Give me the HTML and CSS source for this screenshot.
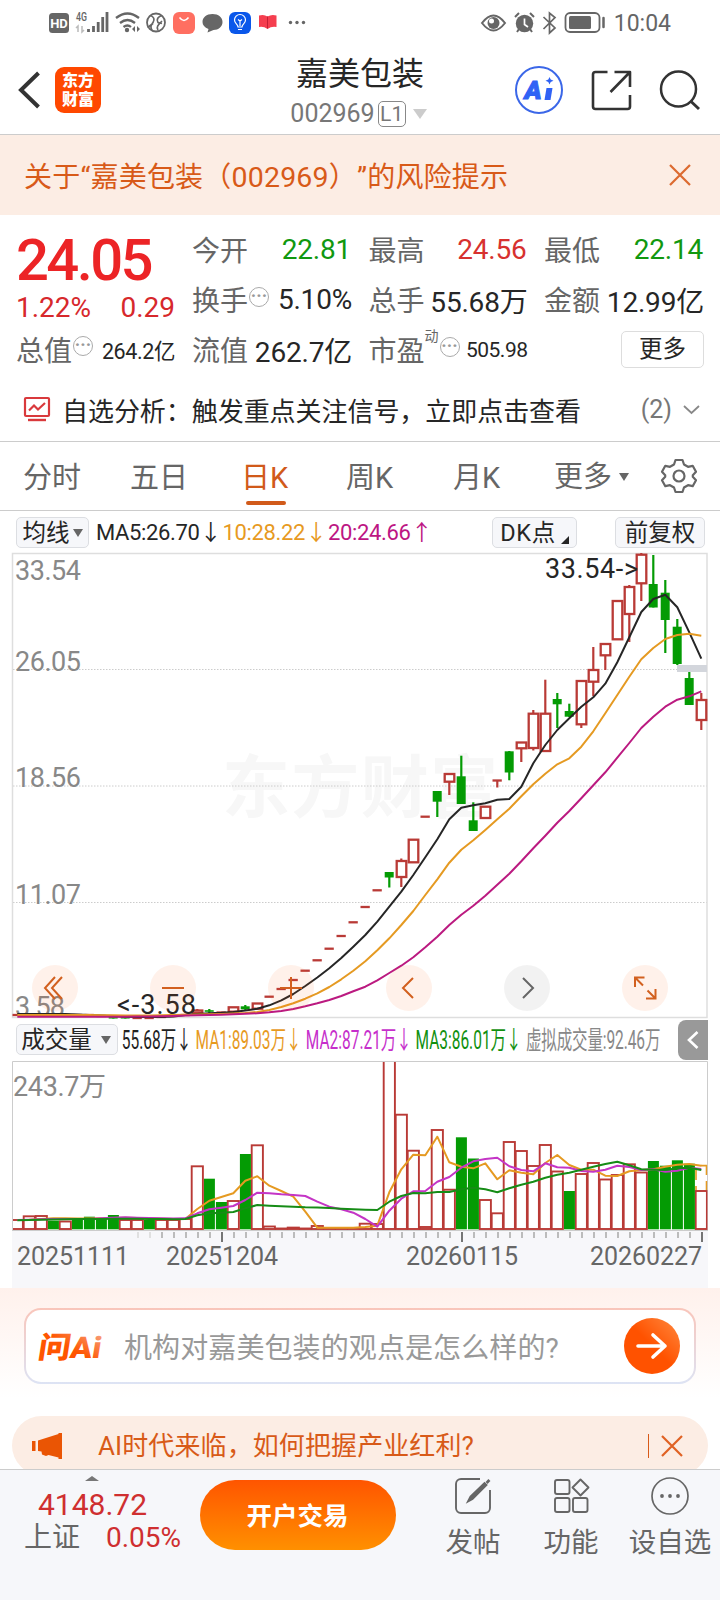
FILE: index.html
```html
<!DOCTYPE html>
<html lang="zh-CN">
<head>
  <meta charset="UTF-8" />
  <meta name="viewport" content="width=device-width, initial-scale=1.0" />
  <title>嘉美包装 002969</title>
  <link rel="stylesheet" href="styles.css">
</head>
<body>
  <div class="status-bar">
    <svg class="status-icons" width="310" height="44" viewBox="0 0 310 44">
      <rect x="49" y="13" width="20" height="20" rx="3.5" fill="#666" />
      <text class="hd" x="59" y="28" text-anchor="middle">HD</text>
      <text class="net" x="76" y="21" textLength="11" lengthAdjust="spacingAndGlyphs">4G</text>
      <path d="M78 32v-6l-2 2M82 26v6l2-2" stroke="#bbb" stroke-width="1.5" fill="none" />
      <path d="M88.5 32v-3M93.5 32v-6M98.200 32v-10M102.700 32v-15M107 32v-20" stroke="#666" stroke-width="2.800" />
      <path d="M116 18q11.500-9 23 0M120 23q7.500-6 15 0M123.500 27q4-3 7.500 0" stroke="#666" stroke-width="2.300" fill="none" />
      <circle cx="127" cy="30" r="2.200" fill="#666" />
      <path d="M135 26v6l-3-3zM137 26v6l3-3z" fill="#666" />
      <circle cx="156" cy="22.500" r="9" stroke="#666" stroke-width="1.800" fill="none" />
      <path d="M150 15.500c4 1 5 4 3 7s-3 4-1 8M162 15.500c-4 1-6 4-4 7l4 1M147.500 27.500l5.500-4M158 30c-2-3 0-5 4-9" stroke="#666" stroke-width="1.700" fill="none" />
      <rect x="173" y="12" width="22" height="22" rx="6" fill="#ff6f61" />
      <path d="M179.500 17.500q4.500 6 9 0" stroke="#fff" stroke-width="1.500" fill="none" />
      <path d="M212.500 14c6 0 10 3.500 10 8s-4 8-9 8l-6 2.500 1-3.500c-4-1.500-6-4-6-7 0-4.500 4-8 10-8z" fill="#666" />
      <rect x="229" y="12" width="22" height="22" rx="6" fill="#0a57ea" />
      <path d="M238 27c0-3-3.500-3.500-3.500-7a5.500 5.500 0 0 1 11 0c0 3.500-3.500 4-3.500 7zM238 29.500h4M240 26v-5l-2-1.500M240 21l2-1.500" stroke="#fff" stroke-width="1.200" fill="none" />
      <path d="M259 15.500q5-1.500 8.500 1 4-2.500 9-1v11.500q-5-1-9 2-4-3-8.500-2z" fill="#f53e4f" />
      <path d="M267.500 16.500v12" stroke="#c41f35" stroke-width="1" />
      <g fill="#666"><circle cx="290.500" cy="22.500" r="1.700" /><circle cx="297" cy="22.500" r="1.700" /><circle cx="303.500" cy="22.500" r="1.700" /></g>
    </svg>
    <div class="status-right">
      <svg width="126" height="44" viewBox="480 0 126 44">
        <path d="M482 23q11.500-15 23 0-11.500 15-23 0z" stroke="#666" stroke-width="2" fill="none" />
        <circle cx="493.500" cy="23" r="6" fill="#666" />
        <circle cx="491.500" cy="21" r="2.500" fill="#fff" />
        <circle cx="524.500" cy="23.500" r="8.700" fill="#666" />
        <path d="M515 17l4-4M534 17l-4-4M517 32l2-3M532 32l-2-3" stroke="#666" stroke-width="2" />
        <path d="M524.500 18.500v6l3.500 2.500" stroke="#fff" stroke-width="1.700" fill="none" />
        <path d="M543.500 17l11.500 11-5.500 5V13l5.500 4.500L543.500 29" stroke="#666" stroke-width="1.700" fill="none" />
        <rect x="565.500" y="13" width="34" height="19" rx="4.500" stroke="#666" stroke-width="1.800" fill="none" />
        <rect x="569" y="16" width="22" height="13" rx="1.500" fill="#666" />
        <path d="M603.500 18v9" stroke="#666" stroke-width="2.500" stroke-linecap="round" />
      </svg>
      <span class="clock">10:04</span>
    </div>
  </div>

  <header class="header">
    <div class="header-left">
      <svg width="22" height="38" viewBox="0 0 22 38"><path d="M20.500 2L3 19l17.500 17" stroke="#333" stroke-width="4" fill="none" /></svg>
      <div class="logo">东方<br>财富</div>
    </div>
    <div class="header-title">
      <div class="name">嘉美包装</div>
      <div class="code"><span>002969</span><span class="level">L1</span><i class="tri light"></i></div>
    </div>
    <div class="header-right">
      <svg class="ai-icon" width="48" height="48" viewBox="0 0 48 48">
        <circle cx="24" cy="24" r="23" fill="none" stroke="#3b67e8" stroke-width="2" />
        <text x="9.500" y="32.500">A</text>
        <path d="M31.500 22h6l-2 12h-6z" fill="#2f62f5" />
        <path d="M34.500 11l1.200 2.600 2.800 1.200-2.800 1.200-1.200 2.600-1.200-2.600-2.800-1.200 2.800-1.200z" fill="#2f62f5" />
      </svg>
      <svg width="40" height="40" viewBox="0 0 40 40" fill="none" stroke="#333" stroke-width="2.600" stroke-linejoin="round">
        <path d="M16.500 2H4.500A2.500 2.500 0 0 0 2 4.500v32A2.500 2.500 0 0 0 4.500 39h32a2.500 2.500 0 0 0 2.500-2.500V25M23.500 2H39v15M39 2L19.500 22" />
      </svg>
      <svg width="42" height="40" viewBox="0 0 42 40" fill="none" stroke="#333" stroke-width="2.500">
        <circle cx="19.500" cy="19" r="17.500" /><path d="M31.500 31L40 39" stroke-width="3" />
      </svg>
    </div>
  </header>

  <div class="risk-banner">
    <span>关于“嘉美包装（<span class="digits">002969</span>）”的风险提示</span>
    <svg width="24" height="24" viewBox="0 0 24 24"><path d="M2 2l20 20M22 2L2 22" stroke="#dc6a30" stroke-width="2.200" /></svg>
  </div>

  <section class="quote">
    <div class="quote-price">
      <div class="price">24.05</div>
      <div class="change"><span>1.22%</span><span>0.29</span></div>
      <div class="cell"><label>总值</label><i class="more-dot">···</i><b class="small">264.2亿</b></div>
    </div>
    <div class="quote-grid">
      <div class="cell"><label>今开</label><b class="green">22.81</b></div>
      <div class="cell"><label>最高</label><b class="red">24.56</b></div>
      <div class="cell"><label>最低</label><b class="green">22.14</b></div>
      <div class="cell"><label>换手</label><i class="more-dot">···</i><b>5.10%</b></div>
      <div class="cell"><label>总手</label><b>55.68万</b></div>
      <div class="cell"><label>金额</label><b>12.99亿</b></div>
      <div class="cell"><label>流值</label><b>262.7亿</b></div>
      <div class="cell"><label>市盈<sup>动</sup></label><i class="more-dot shifted">···</i><b class="small pe">505.98</b></div>
      <div class="cell"><button class="more-btn">更多</button></div>
    </div>
  </section>

  <div class="analysis">
    <svg width="26" height="25" viewBox="0 0 26 25" fill="none" stroke="#d9393c">
      <rect x="1" y="1" width="24" height="18" rx="1" stroke-width="2.200" />
      <path d="M5 13.500l5-5 4 4 7-6.500" stroke-width="2.200" /><path d="M4 23h18" stroke-width="2.400" />
    </svg>
    <span class="analysis-text">自选分析：触发重点关注信号，立即点击查看</span>
    <span class="analysis-count">(2)</span>
    <svg width="17" height="10" viewBox="0 0 17 10"><path d="M1 1l7.500 7L16 1" stroke="#888" stroke-width="1.800" fill="none" /></svg>
  </div>

  <nav class="tabs">
    <span>分时</span>
    <span>五日</span>
    <span class="active">日K</span>
    <span>周K</span>
    <span>月K</span>
    <span class="tab-more">更多<i class="tri"></i></span>
    <svg width="36" height="36" viewBox="0 0 36 36" fill="none" stroke="#666" stroke-width="2.200" stroke-linejoin="round">
      <path d="M14.500 2h7l1.500 4.500 4 2.300 4.700-1 3.300 6-3.200 3.500v1.400l3.200 3.500-3.300 6-4.700-1-4 2.300L21.500 34h-7L13 29.500l-4-2.300-4.700 1-3.300-6 3.200-3.500v-1.400L1 13.800l3.300-6 4.700 1 4-2.300z" />
      <circle cx="18" cy="18" r="5.500" />
    </svg>
  </nav>

  <div class="legend">
    <button class="chip chip-ma">均线<i class="tri"></i></button>
    <span class="ma ma5">MA5:26.70<em>↓</em></span>
    <span class="ma ma10">10:28.22<em>↓</em></span>
    <span class="ma ma20">20:24.66<em>↑</em></span>
    <button class="chip chip-dk">DK点<i class="corner"></i></button>
    <button class="chip chip-adj">前复权</button>
  </div>

  <div class="chart">
    <svg id="kline" width="720" height="466" viewBox="0 553 720 466"></svg>
    <div class="chart-tools">
      <button><svg viewBox="0 0 46 46"><path d="M23 12L13 23l10 11M30 12L20 23l10 11" /></svg></button>
      <button><svg viewBox="0 0 46 46"><path d="M12 23h22" /></svg></button>
      <button><svg viewBox="0 0 46 46"><path d="M12 23h22M23 12v22" /></svg></button>
      <button><svg viewBox="0 0 46 46"><path d="M27 13L17 23l10 10" /></svg></button>
      <button class="off"><svg viewBox="0 0 46 46"><path d="M19 13l10 10-10 10" /></svg></button>
      <button><svg viewBox="0 0 46 46"><path d="M13 22v-9.500h9.500M13 12.500l8 8M33.500 24v9.500H24M33.500 33.500l-8-8" /></svg></button>
    </div>
  </div>

  <div class="vol-head">
    <button class="chip chip-vol">成交量<i class="tri"></i></button>
    <!-- squeezed horizontally so that all values fit on one line -->
    <svg width="548" height="42" viewBox="0 0 884 42" preserveAspectRatio="none">
      <text x="6" y="30" textLength="113" fill="#222">55.68万↓</text>
      <text x="125" y="30" textLength="171" fill="#e79a1f">MA1:89.03万↓</text>
      <text x="303" y="30" textLength="171" fill="#c62fcb">MA2:87.21万↓</text>
      <text x="480" y="30" textLength="171" fill="#11900f">MA3:86.01万↓</text>
      <text x="658" y="30" textLength="217" fill="#888">虚拟成交量:92.46万</text>
    </svg>
    <button class="collapse"><svg width="12" height="20" viewBox="0 0 12 20"><path d="M10.500 2L2 10l8.500 8" stroke="#fff" stroke-width="2.600" fill="none" /></svg></button>
  </div>

  <svg id="volume" width="720" height="227" viewBox="0 1061 720 227"></svg>

  <div class="bottom-feed">
    <div class="ask">
      <svg class="ask-logo" width="68" height="40" viewBox="0 0 68 40">
        <defs>
          <linearGradient id="askGrad" x1="0" x2="1" y1="1" y2="0"><stop offset="0.500" stop-color="#ff5500" /><stop offset="1" stop-color="#f7ad93" /></linearGradient>
        </defs>
        <g transform="skewX(-9)">
          <text x="4" y="32" textLength="63" lengthAdjust="spacingAndGlyphs" fill="url(#askGrad)">问Ai</text>
        </g>
      </svg>
      <span class="ask-text">机构对嘉美包装的观点是怎么样的?</span>
      <span class="ask-go"><svg width="32" height="28" viewBox="0 0 32 28"><path d="M2 14h27M17 3l12 11-12 11" stroke="#fff" stroke-width="3.600" fill="none" stroke-linecap="round" stroke-linejoin="round" /></svg></span>
    </div>
    <div class="notice">
      <svg width="31" height="28" viewBox="0 0 31 28" fill="#ea5504">
        <path d="M0 9h3.500v10H0zM6 8.500L26.500 2V1H30v26h-3.500v-1.500l-10-2.500-2.500 1-4-1.500-.5-3L6 19z" />
      </svg>
      <span class="notice-text">AI时代来临，如何把握产业红利?</span>
      <i class="bar"></i>
      <svg width="22" height="22" viewBox="0 0 22 22"><path d="M1 1l20 20M21 1L1 21" stroke="#e06224" stroke-width="2.200" /></svg>
    </div>
  </div>

  <footer class="footer">
    <div class="index">
      <i class="caret"></i>
      <div class="index-value">4148.72</div>
      <div class="index-row"><span>上证</span><b>0.05%</b></div>
    </div>
    <button class="trade">开户交易</button>
    <div class="actions">
      <div class="action action-post">
        <svg width="38" height="38" viewBox="0 0 38 38" fill="none" stroke="#666" stroke-width="1.900">
          <path d="M26 2H7a5 5 0 0 0-5 5v24a5 5 0 0 0 5 5h24a5 5 0 0 0 5-5V13" />
          <path d="M14 24.500l2.500-5L30.500 6l2 2-14 14z" fill="#666" /><path d="M33 3.500l2 2" stroke-width="4" />
        </svg>
        <span>发帖</span>
      </div>
      <div class="action action-func">
        <svg width="38" height="38" viewBox="0 0 38 38" fill="none" stroke="#666" stroke-width="1.900" stroke-linejoin="round">
          <rect x="3" y="3" width="14.500" height="14" rx="2" /><rect x="3" y="21" width="14.500" height="14" rx="2" /><rect x="21" y="21" width="14.500" height="14" rx="2" />
          <path d="M28.500 2.500l8 8-8 8-8-8z" />
        </svg>
        <span>功能</span>
      </div>
      <div class="action action-fav">
        <svg width="38" height="38" viewBox="0 0 38 38">
          <circle cx="19" cy="19" r="18" fill="none" stroke="#666" stroke-width="1.700" />
          <g fill="#666"><circle cx="11" cy="19" r="1.900" /><circle cx="19" cy="19" r="1.900" /><circle cx="27" cy="19" r="1.900" /></g>
        </svg>
        <span>设自选</span>
      </div>
    </div>
  </footer>

  <script>
    const RED = '#b93a36';
    const GREEN = '#049b04';
    const STEP = 12;
    const LAST_X = 701.3;
    const xAt = i => LAST_X - i * STEP;

    // newest first: [colour, body top, body bottom, high, low]
    const candles = [
      ['r', 700, 720, 693, 730], ['g', 678, 705, 672, 705], ['g', 626.7, 664, 619, 665],
      ['g', 592.7, 620, 580, 653], ['g', 584, 607.5, 555, 607.5], ['r', 554.7, 583.3, 553, 601],
      ['r', 587, 614, 585, 642], ['r', 601, 639.3, 601, 639.3], ['r', 644, 655.3, 644, 670],
      ['r', 670, 681.7, 647, 696], ['r', 681, 724.3, 681, 728], ['g', 711, 716.7, 703.7, 717],
      ['g', 699, 704.3, 693, 728], ['r', 713.7, 751, 679.7, 751], ['r', 713.7, 748, 710, 750.5],
      ['r', 742.5, 748.3, 742, 762], ['g', 751.3, 772.5, 751, 780.3], ['r', 780.5, 780.5, 780, 787.5],
      ['r', 806.7, 818, 807, 818], ['g', 820.3, 831, 802.3, 831], ['g', 776.3, 804, 755.7, 804],
      ['r', 774, 781.7, 774, 795], ['g', 791, 801.7, 791, 817], ['r', 816.7, 816.7], ['r', 839.7, 862.3, 840, 862],
      ['r', 861, 877, 858.5, 887], ['g', 872, 877.5, 872, 887.5], ['r', 890.3, 890.3], ['r', 907, 907],
      ['r', 922.3, 922.3], ['r', 936, 936], ['r', 948.7, 948.7], ['r', 960.3, 960.3], ['r', 970.7, 970.7],
      ['r', 980, 980], ['r', 989, 989], ['r', 996.7, 996.7], ['r', 1003.5, 1008.7], ['g', 1006.3, 1009.3, 1005, 1010.5],
      ['r', 1007.3, 1011.7], ['r', 1012.5, 1012.5], ['g', 1010.2, 1011.8, 1009, 1013], ['r', 1010.5, 1013, 1009, 1013],
      ['r', 1015, 1015], ['r', 1016, 1016], ['r', 1017, 1017], ['r', 1018, 1018], ['r', 1018, 1018], ['g', 1017, 1018.5],
      ['g', 1017, 1018.5], ['r', 1016, 1016], ['r', 1015, 1015], ['r', 1015, 1015], ['r', 1015, 1015], ['r', 1015, 1015],
      ['r', 1015, 1015], ['r', 1015, 1015], ['r', 1015, 1015]
    ];

    const ma5 = [658.7, 632.3, 607.3, 594.7, 599, 612, 637.3, 662.3, 683.7, 697.3, 706.7, 718.3, 730, 745, 763.3, 786.7, 799, 799.7, 803.3, 805.3, 807.7, 819.3, 839.3, 857.3, 875, 891.7, 906.7, 921.7, 935, 946.7, 958, 968.3, 977.5, 986, 994, 1000.3, 1005.3, 1008.7, 1010.5, 1012, 1012.8, 1013.3, 1014, 1015, 1016.5, 1017, 1017, 1017, 1016.7, 1016, 1015.5, 1015, 1014.5, 1014, 1014, 1014, 1014, 1014];
    const ma10 = [635.7, 633.7, 635, 639, 648, 659.3, 676.7, 695, 713.3, 731.3, 746.7, 758.3, 764.3, 773.7, 784.3, 796.3, 808.7, 819.3, 830, 840.3, 849.7, 862.7, 879.3, 895, 911, 925, 938.3, 950.3, 961.3, 970.7, 979.3, 987, 993.3, 998.7, 1003.3, 1007, 1010, 1012, 1013, 1013.5, 1014, 1014.3, 1014.6, 1014.8, 1015, 1015.3, 1015.5, 1015.5, 1015.5, 1015.3, 1015.3, 1015, 1015, 1015, 1015, 1015, 1015, 1015];
    const ma20 = [691.3, 696.3, 699.7, 706.7, 716.7, 728, 743, 757.7, 772.3, 785.3, 798.3, 811, 822.7, 835.7, 848.3, 861.3, 873.7, 884.7, 895.7, 905.7, 914.7, 925, 936.7, 947.3, 957.3, 965.7, 973, 980.3, 986.7, 991.3, 996, 1000, 1003.3, 1006.3, 1009, 1011, 1012.3, 1013.3, 1013.8, 1014.3, 1014.7, 1015, 1015.3, 1015.6, 1016, 1016.3, 1016.5, 1016.5, 1016.7, 1016.7, 1016.7, 1016.7, 1016.7, 1016.7, 1016.7, 1016.7, 1016.7, 1016.7];

    // newest first: [colour, bar top]
    const volumes = [
      ['r', 1191], ['g', 1163.7], ['g', 1160.3], ['g', 1165.7], ['g', 1161], ['r', 1172.5], ['r', 1164.3], ['r', 1175],
      ['r', 1179.5], ['r', 1163], ['r', 1174], ['g', 1191], ['r', 1171.5], ['r', 1145], ['r', 1166], ['r', 1151],
      ['r', 1142], ['r', 1213.3], ['r', 1200], ['g', 1158.5], ['g', 1137.3], ['r', 1189.7], ['r', 1130], ['r', 1227],
      ['r', 1150.7], ['r', 1114.7], ['r', 1050], ['r', 1224], ['r', 1223.7], ['r', 1228.5], ['r', 1228.5], ['r', 1228.5],
      ['r', 1226], ['r', 1228.5], ['r', 1227.6], ['r', 1228.5], ['r', 1226.5], ['r', 1145.3], ['g', 1154], ['r', 1201],
      ['g', 1202], ['g', 1178.7], ['r', 1166.3], ['r', 1219], ['r', 1220], ['r', 1220], ['g', 1220], ['r', 1220],
      ['r', 1220], ['g', 1215], ['g', 1218.7], ['g', 1216.7], ['g', 1220], ['r', 1221.5], ['g', 1220.7], ['r', 1216],
      ['r', 1216.3], ['r', 1220]
    ];
    const vma1 = [1165.7, 1164, 1164.7, 1166.7, 1169.3, 1170, 1171.3, 1176, 1175.7, 1169.7, 1169.7, 1165, 1155, 1163, 1174.3, 1172.7, 1170.3, 1179.3, 1163.3, 1168.3, 1166.7, 1162.3, 1136.7, 1155.3, 1154.7, 1169.3, 1192.3, 1225.7, 1227, 1227.7, 1227.7, 1227.7, 1227.7, 1211.7, 1196.7, 1191, 1185.7, 1176.3, 1180.7, 1193.3, 1197, 1200.7, 1209, 1219, 1219, 1218.7, 1218.3, 1218, 1217.7, 1218, 1218.3, 1218.5, 1218.5, 1218.3, 1218.3, 1219, 1219.7, 1220];
    const vma2 = [1169, 1167.7, 1170.7, 1171.7, 1169.3, 1170, 1167, 1165.7, 1169.7, 1171.7, 1171, 1167.7, 1167.3, 1163.3, 1171.3, 1170, 1166.3, 1157.7, 1159, 1161.3, 1167.7, 1177, 1181.7, 1191, 1191.3, 1198.7, 1210.7, 1226.7, 1219, 1212.7, 1209.3, 1206.7, 1201.7, 1196, 1195, 1194.3, 1193.3, 1192.7, 1200, 1206, 1207.7, 1209.3, 1213.3, 1218.3, 1218.5, 1218.3, 1218, 1217.7, 1217.3, 1217.7, 1218.3, 1219, 1219, 1219, 1219, 1219.3, 1219.7, 1220];
    const vma3 = [1170, 1167.7, 1168.3, 1170, 1169.7, 1169.3, 1165.3, 1161.7, 1164, 1166.7, 1169.7, 1172.7, 1174.7, 1177.7, 1181.7, 1184.7, 1188.3, 1192.3, 1189.3, 1187.7, 1189.3, 1192, 1192, 1193.3, 1193, 1196, 1201.7, 1210, 1209.7, 1209.3, 1208.7, 1208, 1207.5, 1207.3, 1206.7, 1206.3, 1205.7, 1205, 1208.3, 1212, 1212.7, 1213.3, 1215.3, 1219, 1219.3, 1219, 1219, 1218.7, 1218.7, 1218.7, 1219, 1219, 1219, 1219.3, 1219.5, 1219.7, 1220, 1220.3];

    function line(values, color) {
      const pts = values.map((y, i) => `${xAt(i).toFixed(1)},${y}`).join(' ');
      return `<polyline points="${pts}" fill="none" stroke="${color}" stroke-width="2" stroke-linejoin="round" />`;
    }

    function candle([c, top, bottom, high = top, low = bottom], i) {
      const x = xAt(i);
      const color = c === 'r' ? RED : GREEN;
      if (c === 'g') {
        return `<path d="M${x - 4.6} ${top}h9v${bottom - top}h-9z" fill="${color}" /><path d="M${x} ${high}V${low}" stroke="${color}" stroke-width="2.2" />`;
      }
      let out = '';
      if (high < top) out += `<path d="M${x} ${high}V${top}" stroke="${color}" stroke-width="2.2" />`;
      if (low > bottom) out += `<path d="M${x} ${bottom}V${low}" stroke="${color}" stroke-width="2.2" />`;
      if (bottom - top < 1) {
        return out + `<path d="M${x - 4.8} ${top}h9.300" stroke="${color}" stroke-width="2.3" />`;
      }
      return out + `<rect x="${x - 4.6}" y="${top}" width="9.600" height="${bottom - top}" fill="#fff" stroke="${color}" stroke-width="2.3" />`;
    }

    function drawKline() {
      let s = '<text class="watermark" x="222" y="812" textLength="276">东方财富</text>';
      [669.5, 786, 902.5].forEach(y => {
        s += `<path d="M13 ${y}H707" stroke="#ccc" stroke-width="1" stroke-dasharray="1.5 1.5" />`;
      });
      s += '<rect x="12.500" y="553.500" width="694.500" height="464" fill="none" stroke="#dedede" stroke-width="1.500" />';
      [['33.54', 580], ['26.05', 671], ['18.56', 787], ['11.07', 904], ['3.58', 1015.5]].forEach(([t, y]) => {
        s += `<text class="axis" x="15" y="${y}" textLength="${t.length === 5 ? 66 : 50}">${t}</text>`;
      });
      s += candles.map(candle).join('');
      s += line(ma5, '#262626') + line(ma10, '#e59a22') + line(ma20, '#bb1a80');
      s += '<rect x="677" y="665" width="30" height="7" fill="#d3d6dc" />';
      s += '<text class="mark" x="545" y="578" textLength="93">33.54-&gt;</text>';
      s += '<text class="mark" x="117" y="1013.500" textLength="79">&lt;-3.58</text>';
      document.getElementById('kline').innerHTML = s;
    }

    function drawVolume() {
      let s = '<rect x="12" y="1231" width="696" height="57" fill="#f7f7fa" />';
      s += '<path d="M12.500 1230V1061.500H707.500V1230" fill="none" stroke="#ccc" stroke-width="1" />';
      s += '<path d="M12 1230.500H708" stroke="#ccc" stroke-width="1" />';
      s += '<text class="axis" x="13" y="1096" textLength="93">243.7万</text>';
      s += '<clipPath id="volClip"><rect x="13" y="1062" width="694.500" height="168" /></clipPath><g clip-path="url(#volClip)">';
      volumes.forEach(([c, top], i) => {
        const x = xAt(i);
        if (c === 'g') {
          s += `<rect x="${x - 5.4}" y="${top}" width="11" height="${1229.3 - top}" fill="${GREEN}" />`;
        } else {
          s += `<rect x="${x - 5.6}" y="${top}" width="11.200" height="${1229 - top}" fill="none" stroke="${RED}" stroke-width="1.9" />`;
        }
      });
      s += '<path d="M696 1170v20M706.500 1165v25" stroke="#e59a22" stroke-width="1.600" stroke-dasharray="10 6" />';
      s += line(vma1, '#e59a22') + line(vma2, '#c435c6') + line(vma3, '#168c16');
      s += '<path d="M701 1165.700h6" stroke="#e59a22" stroke-width="1.800" /></g>';
      for (let i = 47; i >= 0; i--) {
        const major = i % 20 === 0;
        s += `<path d="M${xAt(i) + 0.7} 1232v${major ? 10 : 6}" stroke="${major ? '#666' : i > 45 ? '#ddd' : '#b5b5b5'}" stroke-width="1.8" />`;
      }
      [['20251111', 17], ['20251204', 166], ['20260115', 406], ['20260227', 590]].forEach(([t, x]) => {
        s += `<text class="date" x="${x}" y="1264.500" textLength="112">${t}</text>`;
      });
      document.getElementById('volume').innerHTML = s;
    }

    drawKline();
    drawVolume();
  </script>
</body>
</html>
```
FILE: styles.css
```css
* { box-sizing: border-box; }
body {
  margin: 0;
  width: 720px;
  height: 1600px;
  overflow: hidden;
  display: flex;
  flex-direction: column;
  background: #fff;
  color: #262626;
  font-family: Roboto, "Noto Sans CJK SC", sans-serif;
}
body > * { flex-shrink: 0; }
button {
  font-family: inherit;
  padding: 0;
  border: 0;
  color: #262626;
  background: none;
}
svg { display: block; flex-shrink: 0; overflow: visible; }
i, em, b { font-style: normal; font-weight: 400; }

.tri {
  display: inline-block;
  border: 5px solid transparent;
  border-top: 8px solid #666;
  border-bottom: 0;
}
.tri.light { border-width: 10px 7px 0; border-top-color: #ccc; }

/* status bar */
.status-bar { height: 44px; display: flex; justify-content: space-between; }
.status-right { display: flex; padding-right: 49px; gap: 8px; }
.clock { line-height: 47px; font-size: 23px; color: #666; }
.hd { font-size: 13px; font-weight: 700; fill: #fff; }
.net { font-size: 13px; font-weight: 500; fill: #666; }

/* header */
.header {
  height: 91px;
  border-bottom: 1px solid #ccc;
  display: grid;
  grid-template-columns: 1fr auto 1fr;
}
.header-left { display: flex; align-items: center; padding: 2px 0 0 18px; gap: 15px; }
.logo {
  width: 46px;
  height: 46px;
  padding-top: 4px;
  border-radius: 9px;
  background: #ff4800;
  color: #fff;
  font-size: 16px;
  font-weight: 900;
  line-height: 19px;
  text-align: center;
}
.header-title { padding-top: 11px; text-align: center; }
.name { font-size: 32px; line-height: 38px; }
.code {
  display: flex;
  align-items: center;
  margin: 6px 0 0 -3px;
  line-height: 30px;
  font-size: 25px;
  color: #777;
}
.level {
  width: 28px;
  height: 26px;
  margin: 0 7px 0 3px;
  border: 1.5px solid #888;
  border-radius: 5px;
  font-size: 21px;
  line-height: 24px;
}
.header-right {
  display: flex;
  align-items: center;
  justify-content: flex-end;
  gap: 28px;
  padding: 2px 19px 0 0;
}
.ai-icon text {
  font-size: 26px;
  font-weight: 900;
  font-style: italic;
  fill: #2f62f5;
  stroke: #2f62f5;
  stroke-width: 1px;
}

.risk-banner {
  height: 80px;
  padding: 1px 28px 2px 24px;
  display: flex;
  align-items: center;
  justify-content: space-between;
  background: #fcede4;
  color: #d85a18;
  font-size: 28px;
  letter-spacing: 0.2px;
  text-spacing-trim: space-all;
}
.risk-banner .digits { font-size: 28.5px; }

/* quote numbers */
.quote { height: 163px; padding: 9px 16px 0 16px; display: flex; }
.quote-price { width: 159px; margin-right: 17px; color: #d7282c; }
.price {
  height: 60px;
  line-height: 72px;
  font-size: 58px;
  font-weight: 500;
  letter-spacing: -2.6px;
  color: #ec2426;
}
.change {
  display: flex;
  justify-content: space-between;
  height: 40px;
  line-height: 48px;
  font-size: 28px;
}
.quote-grid {
  flex: 1;
  display: grid;
  grid-template-columns: 160px 159px 160px;
  grid-auto-rows: 50px;
  column-gap: 16.5px;
  height: 150px;
}
.cell {
  display: flex;
  align-items: center;
  height: 50px;
  color: #262626;
  font-size: 28px;
}
.quote-price .cell { height: 49px; }
.cell label { color: #666; position: relative; }
.cell b { margin-left: auto; letter-spacing: -0.2px; padding-top: 1px; }
.cell .small { font-size: 21.5px; letter-spacing: -0.4px; }
.cell .pe { font-size: 21px; letter-spacing: -0.5px; }
.cell .red { color: #d7312f; padding-right: 1px; }
.cell .green { color: #11980f; padding-right: 1px; }
.cell sup { position: absolute; left: 56px; top: 0; font-size: 14px; line-height: 14px; }
.more-dot {
  width: 20px;
  height: 20px;
  margin: -5px 0 0 1px;
  border: 1.7px solid #aaa;
  border-radius: 50%;
  color: #999;
  font-size: 18px;
  font-weight: 700;
  line-height: 16px;
  text-align: center;
}
.more-dot.shifted { margin-left: 15px; }
.more-btn {
  width: 83px;
  height: 37px;
  margin-left: auto;
  border: 1.5px solid #ddd;
  border-radius: 5px;
  font-size: 23.5px;
  line-height: 33px;
}

.analysis {
  height: 64px;
  padding: 0 20px 0 24px;
  display: flex;
  align-items: center;
  border-bottom: 1px solid #ccc;
  font-size: 26px;
}
.analysis-text { margin-left: 12px; letter-spacing: -0.05px; }
.analysis-count { margin: 0 11px 0 auto; color: #777; font-size: 25px; }

/* period tabs */
.tabs {
  height: 69px;
  padding: 0 23px 0 23px;
  display: grid;
  grid-template-columns: 107px 111px 105px 107px 101px 1fr auto;
  align-items: center;
  border-bottom: 1px solid #ccc;
  color: #666;
  font-size: 29px;
  line-height: 68px;
}
.tabs span { padding-top: 2px; height: 68px; }
.tabs .active { position: relative; color: #d15a1a; }
.tabs .active::after {
  content: "";
  position: absolute;
  left: 5px;
  bottom: 5px;
  width: 40px;
  height: 4px;
  border-radius: 2px;
  background: #d15a1a;
}
.tabs .tab-more { display: flex; align-items: center; gap: 7px; }

.legend {
  height: 42px;
  padding: 6px 15px 0 16px;
  display: flex;
  align-items: flex-start;
  font-size: 22px;
  line-height: 31px;
}
.chip {
  height: 31px;
  display: flex;
  align-items: center;
  justify-content: center;
  border: 1.5px solid #dcdee2;
  border-radius: 5px;
  background: #f6f7fa;
  font-size: 23.5px;
  line-height: 28px;
}
.chip-ma { width: 73px; gap: 3px; margin-right: 7px; }
.chip-dk { width: 85px; margin-left: auto; letter-spacing: 0.6px; }
.chip-adj { width: 90px; margin-left: 38px; }
.corner {
  border: 4px solid #262626;
  border-top-color: transparent;
  border-left-color: transparent;
  margin: 14px 0 0 5px;
}
.ma { display: flex; letter-spacing: -0.35px; }
.ma em {
  width: 22px;
  margin: 0 1px 0 0;
  text-align: center;
}
.ma5 { color: #262626; }
.ma10 { color: #e79a1f; }
.ma20 { color: #bd1683; }

/* candlestick chart */
.chart { position: relative; height: 466px; }
.watermark {
  font-family: "Noto Sans CJK SC", sans-serif;
  font-size: 68px;
  font-weight: 700;
  fill: #f7f7f7;
}
.axis { font-size: 27px; fill: #888; }
.mark { font-size: 27px; fill: #262626; }
.date { font-size: 25px; fill: #666; }
.chart-tools {
  position: absolute;
  left: 32px;
  top: 412px;
  display: flex;
  gap: 72px;
}
.chart-tools button {
  width: 46px;
  height: 46px;
  border-radius: 50%;
  background: rgba(255, 95, 20, 0.09);
}
.chart-tools path { fill: none; stroke: #d2601f; stroke-width: 2; }
.chart-tools .off { background: rgba(0, 0, 0, 0.05); }
.chart-tools .off path { stroke: #666; }

.vol-head {
  height: 42px;
  padding: 0 12px 0 16px;
  display: flex;
  align-items: flex-start;
}
.vol-head text { font-size: 25px; }
.chip-vol { width: 102px; margin-top: 5px; padding-right: 2px; gap: 9px; }
.collapse {
  width: 30px;
  height: 40px;
  margin: 1px 0 0 auto;
  padding-left: 9px;
  border-radius: 8px 0 0 8px;
  background: #999;
}

.bottom-feed {
  height: 181px;
  padding-top: 20px;
  overflow: hidden;
  background: linear-gradient(#fff1ec, #fff 110px);
}
.ask {
  height: 76px;
  margin: 0 24px;
  padding: 0 14px 0 12px;
  display: flex;
  align-items: center;
  border: 2px solid transparent;
  border-radius: 17px;
  background:
    linear-gradient(#fff, #fff) padding-box,
    linear-gradient(#f9c5ba, #dde3f4) border-box;
}
.ask-logo text { font-size: 30px; font-weight: 900; }
.ask-text { margin-left: 18px; color: #999; font-size: 28px; letter-spacing: 0.1px; }
.ask-go {
  width: 56px;
  height: 56px;
  margin-left: auto;
  display: flex;
  align-items: center;
  justify-content: center;
  border-radius: 50%;
  background: linear-gradient(45deg, #ff5200 50%, #ff8a40);
}
.notice {
  height: 59px;
  margin: 32px 12px 0;
  padding: 0 25px 0 20px;
  display: flex;
  align-items: center;
  border-radius: 30px;
  background: #fcede4;
  color: #d85a18;
  font-size: 26px;
}
.notice-text { margin-left: 35px; padding-bottom: 4px; letter-spacing: 0.1px; }
.notice .bar { width: 1.5px; height: 24px; margin: 0 12px 0 auto; background: #d85a18; }

/* bottom bar */
.footer {
  height: 131px;
  display: flex;
  align-items: flex-start;
  border-top: 1px solid #ccc;
  background: #f6f7fa;
}
.index { width: 184px; padding: 6px 3px 0 24px; margin-right: 16px; }
.caret {
  display: block;
  width: 14px;
  margin-left: 61px;
  border: 7px solid transparent;
  border-width: 0 7px 5px;
  border-bottom-color: #777;
}
.index-value { margin: 6px 0 0 14px; font-size: 30px; line-height: 36px; color: #cf2f30; }
.index-row {
  display: flex;
  justify-content: space-between;
  font-size: 28px;
  line-height: 30px;
  color: #666;
}
.index-row b { color: #cf2f30; }
.trade {
  width: 196px;
  height: 70px;
  margin-top: 10px;
  padding: 0 1px 4px 0;
  border-radius: 35px;
  background: linear-gradient(#ff5500, #ff9000);
  color: #fff;
  font-size: 25.5px;
  font-weight: 700;
}
.actions { flex: 1; display: flex; }
.action {
  display: flex;
  flex-direction: column;
  align-items: center;
  padding-top: 7px;
  color: #666;
  font-size: 27.5px;
  line-height: 55px;
}
.action-post { width: 56px; margin-left: 49px; }
.action-func { width: 56px; margin-left: 42px; }
.action-fav { width: 84px; margin-left: 29px; }
```
